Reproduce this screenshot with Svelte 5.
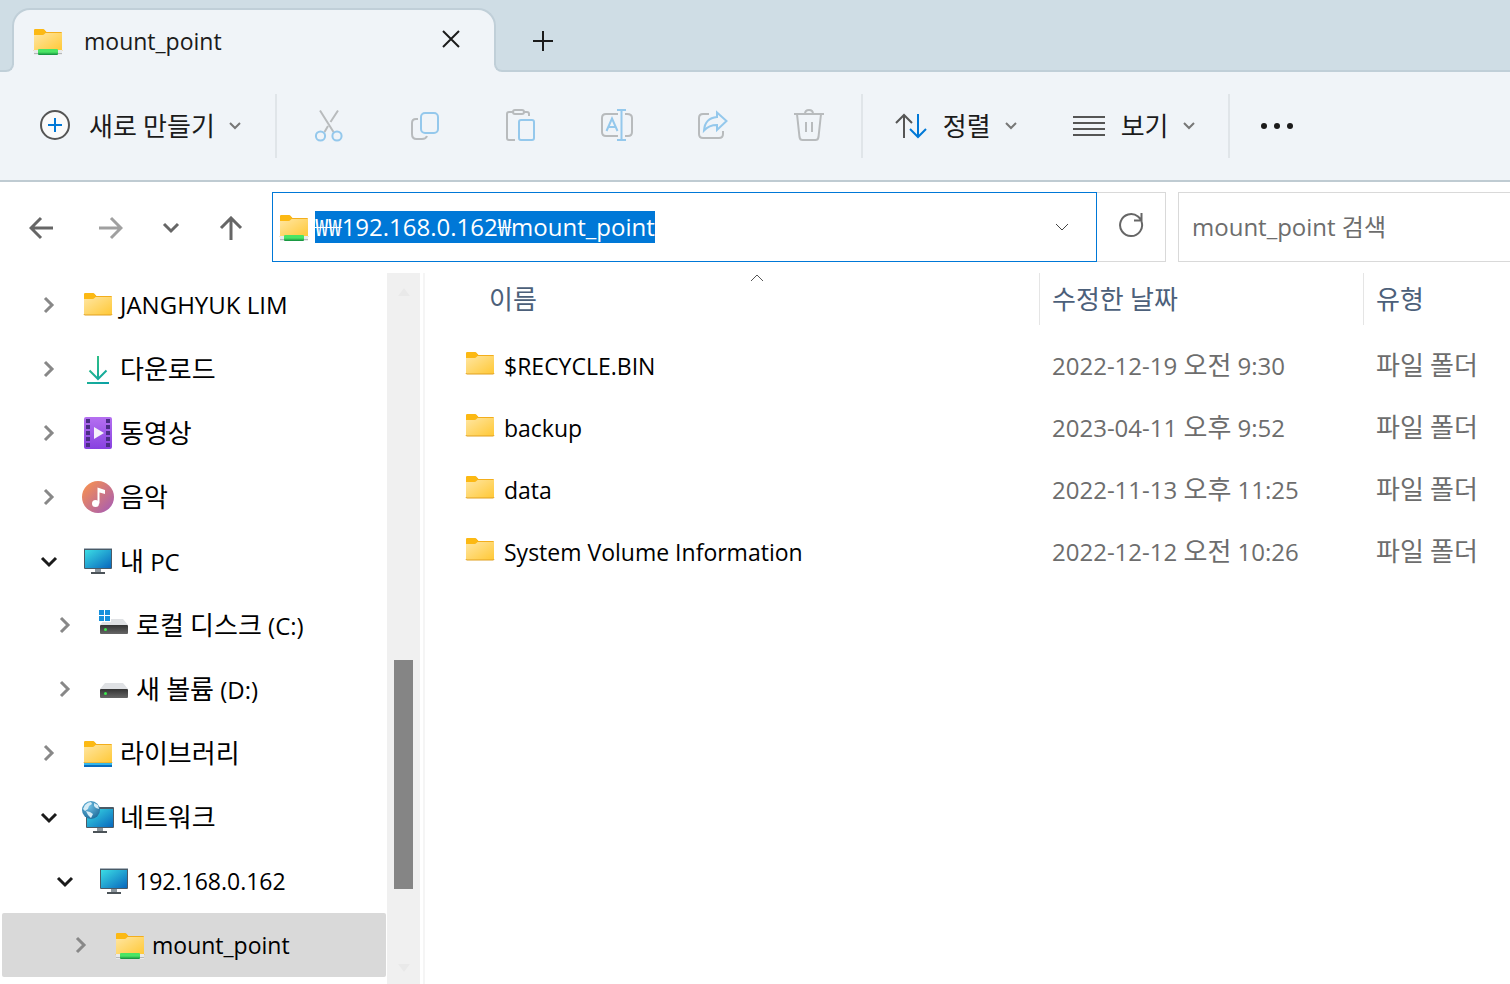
<script>
  import { onMount } from 'svelte';

  let address = $state('₩₩192.168.0.162₩mount_point');
  let query = $state('');
  let selected = $state('mount_point');
  let addressBox;

  const tree = [
    { name: 'JANGHYUK LIM', icon: 'folder', level: 0 },
    { name: '다운로드', icon: 'download', level: 0 },
    { name: '동영상', icon: 'video', level: 0 },
    { name: '음악', icon: 'music', level: 0 },
    { name: '내 PC', icon: 'pc', level: 0, open: true },
    { name: '로컬 디스크 (C:)', icon: 'sysdrive', level: 1 },
    { name: '새 볼륨 (D:)', icon: 'drive', level: 1 },
    { name: '라이브러리', icon: 'library', level: 0 },
    { name: '네트워크', icon: 'network', level: 0, open: true },
    { name: '192.168.0.162', icon: 'pc', level: 1, open: true, remote: true },
    { name: 'mount_point', icon: 'netfolder', level: 2, remote: true },
  ];

  const files = [
    { name: '$RECYCLE.BIN', date: '2022-12-19 오전 9:30', type: '파일 폴더' },
    { name: 'backup', date: '2023-04-11 오후 9:52', type: '파일 폴더' },
    { name: 'data', date: '2022-11-13 오후 11:25', type: '파일 폴더' },
    { name: 'System Volume Information', date: '2022-12-12 오전 10:26', type: '파일 폴더' },
  ];

  const actions = [
    { id: 'cut', label: '잘라내기' },
    { id: 'copy', label: '복사' },
    { id: 'paste', label: '붙여넣기' },
    { id: 'rename', label: '이름 바꾸기' },
    { id: 'share', label: '공유' },
    { id: 'delete', label: '삭제' },
  ];

  // Hangul runs are set a little larger than the Latin around them.
  const runs = (s) => s.split(/([\uac00-\ud7a3]+)/).filter(Boolean);
  const isHangul = (s) => /[\uac00-\ud7a3]/.test(s);

  onMount(() => {
    addressBox.focus();
    addressBox.select();
  });
</script>

{#snippet text(s)}{#each runs(s) as r}<span class:ko={isHangul(r)}>{r}</span>{/each}{/snippet}

{#snippet chevron()}
  <svg class="chev" width="12" height="8" viewBox="0 0 12 8"><path d="M1 1l5 5 5-5" /></svg>
{/snippet}

{#snippet folder()}
  <path d="M2 5.500Q2 4 3.500 4H10.500Q11.500 4 12.300 4.800L14.500 7H29Q30 7 30 8V14H2z" fill="#f3ae1c" />
  <path d="M2 5.500Q2 4 3.500 4H10.500Q11.500 4 12.300 4.800L14 7Q12.500 10 10.500 10H2z" fill="#fcb913" />
  <path d="M2 10H10.500Q11.500 10 12.500 9L13.500 8H30V25Q30 26 29 26H3Q2 26 2 25z" fill="url(#folder-fill)" />
  <path d="M2 25Q2 26 3 26H29Q30 26 30 25" fill="none" stroke="#e0a021" />
{/snippet}

{#snippet monitor()}
  <rect x="13" y="24" width="6" height="4" fill="#8c959c" />
  <rect x="9" y="27" width="14" height="2" fill="#4c5358" />
  <rect x="2" y="3" width="28" height="21" rx="1" fill="#4b5a66" />
  <rect x="2" y="3" width="28" height="1" fill="#a9b4bd" />
  <rect x="3" y="5" width="26" height="18" fill="url(#screen-fill)" />
{/snippet}

{#snippet drive()}
  <path d="M7 10H25L30 16H2z" fill="#dfe1e4" />
  <rect x="2" y="16" width="28" height="9" rx="1" fill="url(#drive-fill)" />
  <circle cx="7.500" cy="20.500" r="1.500" fill="#3bea4d" />
{/snippet}

{#snippet icon(name)}
  <svg class="icon" width="32" height="32" viewBox="0 0 32 32" aria-hidden="true">
    {#if name === 'folder'}
      {@render folder()}
    {:else if name === 'netfolder'}
      {@render folder()}
      <rect x="2" y="25" width="28" height="5" fill="#e9eaeb" />
      <rect x="2" y="28" width="28" height="1" fill="#b5b8bb" />
      <rect x="6" y="24" width="20" height="6" rx="1" fill="url(#pipe-fill)" />
    {:else if name === 'library'}
      {@render folder()}
      <rect x="2" y="26" width="28" height="2" fill="#33b6ea" />
      <rect x="2" y="28" width="28" height="2" fill="#0b6cbd" />
    {:else if name === 'download'}
      <path d="M16 3V26M7.500 17.500L16 26L24.500 17.500M5 30H27" fill="none" stroke="url(#down-fill)" stroke-width="2" />
    {:else if name === 'video'}
      <rect x="2" y="0" width="28" height="32" rx="2" fill="url(#video-fill)" />
      {#each [2, 8, 14, 20, 26] as y}
        <rect x="4" {y} width="4" height="4" fill="#4b2d86" />
        <rect x="24" {y} width="4" height="4" fill="#4b2d86" />
      {/each}
      <path d="M12 10L22 16L12 22z" fill="#f5f2fa" />
    {:else if name === 'music'}
      <circle cx="16" cy="16" r="16" fill="url(#music-fill)" />
      <circle cx="13.500" cy="22.500" r="3.500" fill="#fff" />
      <path d="M15.500 22.500V6.500L23 9V13L17.500 11.500V22.500z" fill="#fff" />
    {:else if name === 'pc'}
      {@render monitor()}
    {:else if name === 'drive'}
      {@render drive()}
    {:else if name === 'sysdrive'}
      {@render drive()}
      <rect x="0" y="0" width="13" height="13" fill="#fff" />
      <path d="M1 1H6V6H1zM7 1H12V6H7zM1 7H6V12H1zM7 7H12V12H7z" fill="#1590dc" />
    {:else if name === 'network'}
      <rect x="15" y="27" width="6" height="3" fill="#8c959c" />
      <rect x="11" y="30" width="14" height="2" fill="#4c5358" />
      <rect x="4" y="6" width="28" height="21" rx="1" fill="#4b5a66" />
      <rect x="5" y="8" width="26" height="18" fill="url(#screen-fill)" />
      <circle cx="9" cy="9" r="9" fill="url(#globe-fill)" />
      <path d="M3 4Q6 1 9 1L10 3L7 5L6 8L3 10L1 8zM12 2L16 4L17 8L14 7L12 5zM4 10L8 11L11 13L9 17L6 14z" fill="#d5ecf6" />
    {/if}
  </svg>
{/snippet}

{#snippet actionIcon(id)}
  <svg class="action" width="36" height="36" viewBox="0 0 36 36" aria-hidden="true">
    {#if id === 'cut'}
      <path class="g" d="M9 2.500L22.500 24M27 2.500L19.500 14M17 18L13.500 24" />
      <circle class="b" cx="9.500" cy="28" r="4.600" />
      <circle class="b" cx="26" cy="28" r="4.600" />
    {:else if id === 'copy'}
      <path class="g" d="M11 11H9Q5 11 5 15V26Q5 31 9.500 31H15Q19 31 20 28" />
      <rect class="b" x="14" y="5" width="17" height="20" rx="4" />
    {:else if id === 'paste'}
      <path class="g" d="M10 4H6Q4 4 4 6V30Q4 32 6 32H12M21 4H24Q26 4 26 6V8" />
      <rect class="g" x="10" y="2" width="11" height="4" rx="2" />
      <rect class="b" x="16" y="12" width="15" height="20" rx="2" />
    {:else if id === 'rename'}
      <path class="g" d="M19 6H7Q3 6 3 10V24Q3 28 7 28H19M26 6H28Q33 6 33 10V24Q33 28 29 28H26" />
      <path class="b" d="M18 2H27M22.500 2V32M18 32H27" />
      <path class="b" d="M7.500 23L13 10.500L18.500 23M9.500 19H16.500" />
    {:else if id === 'share'}
      <path class="g" d="M14 6H8Q4 6 4 10V26Q4 30 8 30H24Q28 30 28 26V23" />
      <path class="b" d="M22 4.500L31.500 13L22 22V17Q14 17 9 22.500Q10 10 22 9z" />
    {:else}
      <path class="g" d="M3 6H33M6 6L8.500 29Q9 32 11.500 32H24.500Q27 32 27.500 29L30 6M14 6Q14 2 18 2Q22 2 22 6M15 14V24M21 14V24" />
    {/if}
  </svg>
{/snippet}

<svg class="defs" width="0" height="0" aria-hidden="true">
  <defs>
    <linearGradient id="folder-fill" x1="0" y1="0" x2="1" y2="1"><stop offset="0" stop-color="#ffe6a2" /><stop offset="1" stop-color="#ffc835" /></linearGradient>
    <linearGradient id="screen-fill" x1="0" y1="0" x2="1" y2="1"><stop offset="0" stop-color="#3bdde5" /><stop offset="1" stop-color="#0867bd" /></linearGradient>
    <linearGradient id="drive-fill" x1="0" y1="0" x2="0" y2="1"><stop offset="0" stop-color="#333" /><stop offset="1" stop-color="#666" /></linearGradient>
    <linearGradient id="pipe-fill" x1="0" y1="0" x2="0" y2="1"><stop offset="0" stop-color="#4ae565" /><stop offset="0.5" stop-color="#4ae565" /><stop offset="1" stop-color="#10893c" /></linearGradient>
    <linearGradient id="down-fill" gradientUnits="userSpaceOnUse" x1="6" y1="4" x2="26" y2="30"><stop offset="0" stop-color="#35c481" /><stop offset="1" stop-color="#0aa1a5" /></linearGradient>
    <linearGradient id="video-fill" x1="0" y1="0" x2="0" y2="1"><stop offset="0" stop-color="#b570f0" /><stop offset="1" stop-color="#8741e0" /></linearGradient>
    <linearGradient id="music-fill" x1="0" y1="0" x2="1" y2="1"><stop offset="0.1" stop-color="#f48f54" /><stop offset="0.9" stop-color="#ab5fae" /></linearGradient>
    <radialGradient id="globe-fill" cx="0.4" cy="0.3" r="0.7"><stop offset="0" stop-color="#6cbde2" /><stop offset="1" stop-color="#23719f" /></radialGradient>
  </defs>
</svg>

<div class="window">
  <header class="titlebar">
    <div class="tab">
      {@render icon('netfolder')}
      <span class="tab-title">mount_point</span>
      <button class="close" aria-label="탭 닫기">
        <svg width="18" height="18" viewBox="0 0 18 18"><path d="M1 1L17 17M17 1L1 17" /></svg>
      </button>
    </div>
    <button class="new-tab" aria-label="새 탭">
      <svg width="20" height="20" viewBox="0 0 20 20"><path d="M10 0V20M0 10H20" /></svg>
    </button>
  </header>

  <div class="toolbar">
    <button class="new">
      <svg width="32" height="32" viewBox="0 0 32 32">
        <circle cx="16" cy="15" r="14" fill="#fafafa" stroke="#555" stroke-width="2" />
        <path d="M16 8V22M9 15H23" stroke="#0078d7" stroke-width="2" />
      </svg>
      {@render text('새로 만들기')}
      {@render chevron()}
    </button>
    <div class="actions">
      {#each actions as a}
        <button aria-label={a.label} disabled>{@render actionIcon(a.id)}</button>
      {/each}
    </div>
    <div class="menus">
      <button>
        <svg width="32" height="26" viewBox="0 0 32 26" fill="none" stroke-width="2">
          <path d="M9 25V2M1 10L9 2L17 10" stroke="#555" />
          <path d="M23 1V24M15 16L23 24L31 16" stroke="#0078d7" />
        </svg>
        {@render text('정렬')}
        {@render chevron()}
      </button>
      <button>
        <svg width="32" height="20" viewBox="0 0 32 20"><path d="M0 1H32M0 7H32M0 13H32M0 19H32" stroke="#555" stroke-width="2" /></svg>
        {@render text('보기')}
        {@render chevron()}
      </button>
    </div>
    <button class="more" aria-label="자세히 보기">
      <svg width="32" height="8" viewBox="0 0 32 8"><circle cx="3" cy="4" r="3" /><circle cx="16" cy="4" r="3" /><circle cx="29" cy="4" r="3" /></svg>
    </button>
  </div>

  <div class="navbar">
    <div class="nav-buttons">
      <button aria-label="뒤로"><svg width="24" height="24" viewBox="0 0 24 24"><path d="M24 12H2M12 2L2 12L12 22" /></svg></button>
      <button aria-label="앞으로" disabled><svg width="24" height="24" viewBox="0 0 24 24"><path d="M0 12H22M12 2L22 12L12 22" /></svg></button>
      <button class="recent" aria-label="최근 위치"><svg width="18" height="12" viewBox="0 0 18 12"><path d="M2 2L9 9L16 2" /></svg></button>
      <button aria-label="위로"><svg width="24" height="24" viewBox="0 0 24 24"><path d="M12 24V2M2 12L12 2L22 12" /></svg></button>
    </div>
    <div class="address">
      {@render icon('netfolder')}
      <input bind:this={addressBox} bind:value={address} aria-label="주소" spellcheck="false" />
      <button aria-label="이전 위치"><svg width="14" height="8" viewBox="0 0 14 8"><path d="M1 1L7 7L13 1" /></svg></button>
    </div>
    <button class="refresh" aria-label="새로 고침">
      <svg width="26" height="26" viewBox="0 0 26 26"><path d="M23.500 9.500A11 11 0 1 1 20 4.500L23 7.500M23.500 1V8.500H16" /></svg>
    </button>
    <input class="search" bind:value={query} placeholder="mount_point 검색" aria-label="검색" />
  </div>

  <div class="body">
    <nav class="tree">
      {#each tree as n}
        <button class="node" class:selected={n.name === selected} style="padding-left: {37 + n.level * 16}px" onclick={() => (selected = n.name)}>
          <svg class="twist" class:open={n.open} width="20" height="20" viewBox="0 0 20 20">
            <path d={n.open ? 'M3 7L10 14L17 7' : 'M6 3L13 10L6 17'} />
          </svg>
          {@render icon(n.icon)}
          <span class="label" class:remote={n.remote}>{@render text(n.name)}</span>
        </button>
      {/each}
    </nav>
    <div class="scrollbar">
      <svg width="12" height="8" viewBox="0 0 12 8"><path d="M6 0L12 8H0z" /></svg>
      <div class="before"></div>
      <div class="thumb"></div>
      <div class="after"></div>
      <svg width="12" height="8" viewBox="0 0 12 8"><path d="M0 0H12L6 8z" /></svg>
    </div>
    <main>
      <table>
        <thead>
          <tr>
            <th class="name" aria-sort="ascending">
              {@render text('이름')}
              <svg class="sort" width="14" height="8" viewBox="0 0 14 8"><path d="M1 7L7 1L13 7" /></svg>
            </th>
            <th class="date">{@render text('수정한 날짜')}</th>
            <th class="type">{@render text('유형')}</th>
          </tr>
        </thead>
        <tbody>
          {#each files as f}
            <tr>
              <td class="name"><div class="file">{@render icon('folder')}<span>{f.name}</span></div></td>
              <td>{@render text(f.date)}</td>
              <td>{@render text(f.type)}</td>
            </tr>
          {/each}
        </tbody>
      </table>
    </main>
  </div>
</div>

<style>
  :global(body) { margin: 0; background: #fff; }
  .defs { position: absolute; }
  .window {
    display: flex; flex-direction: column; min-height: 100vh; overflow: hidden;
    font: 24px/32px "Open Sans", "Noto Sans CJK KR", sans-serif; color: #000;
  }
  button { font: inherit; color: inherit; background: none; border: 0; padding: 0; display: flex; align-items: center; }
  input { font: inherit; color: inherit; border: 0; padding: 0; outline: 0; background: none; min-width: 0; }
  svg { flex: none; display: block; }
  .ko { font-size: 26px; }

  .titlebar { display: flex; height: 72px; box-sizing: border-box; padding: 8px 0 0 12px; background: #cfdde5; box-shadow: inset 0 -2px #c0cfd8; }
  .tab {
    position: relative; display: flex; align-items: center; width: 484px; box-sizing: border-box; padding: 0 34px 0 18px;
    background: #f0f4f8; border: 2px solid #c0cfd8; border-bottom: 0; border-radius: 18px 18px 0 0;
  }
  /* flared feet of the tab */
  .tab::before, .tab::after {
    content: ''; position: absolute; bottom: 0; width: 8px; height: 8px; box-sizing: border-box;
    border: 2px solid #c0cfd8; border-top: 0; background: #cfdde5; box-shadow: 0 3px 0 2px #f0f4f8; clip-path: inset(0);
  }
  .tab::before { right: 100%; border-left: 0; border-bottom-right-radius: 8px; }
  .tab::after { left: 100%; border-right: 0; border-bottom-left-radius: 8px; }
  .tab-title { margin-left: 20px; flex: 1; font-size: 23px; color: #1b1b1b; }
  .close { padding-bottom: 4px; }
  .close svg { stroke: #1b1b1b; stroke-width: 2; }
  .new-tab { padding: 2px 20px 0 37px; }
  .new-tab svg { stroke: #1b1b1b; stroke-width: 2; }

  .toolbar { display: flex; align-items: center; height: 108px; padding-left: 39px; background: #f0f4f8; border-bottom: 2px solid #bfcbd2; color: #1b1b1b; }
  .new { padding-right: 34px; height: 64px; border-right: 2px solid #e0e5e9; white-space: pre; }
  .new svg:first-child { margin-right: 18px; }
  .chev { margin-left: 14px; fill: none; stroke: #777; stroke-width: 2; }
  .actions { display: flex; padding: 0 4px; height: 64px; border-right: 2px solid #e0e5e9; }
  .actions button { width: 96px; justify-content: center; }
  .action { fill: none; stroke-width: 2; }
  .g { stroke: #b8bbbd; }
  .b { stroke: #94c8ec; }
  .menus { display: flex; gap: 56px; height: 64px; padding: 0 33px 0 32px; border-right: 2px solid #e0e5e9; }
  .menus button svg:first-child { margin-right: 16px; }
  .more { padding: 20px 31px; fill: #1b1b1b; }

  .navbar { display: flex; height: 70px; padding: 10px 0 11px 6px; }
  .nav-buttons { display: flex; margin-right: 6px; padding-top: 2px; fill: none; stroke: #666; stroke-width: 3; }
  .nav-buttons button { width: 70px; justify-content: center; }
  .nav-buttons button:disabled { stroke: #a0a0a0; }
  .nav-buttons .recent { width: 50px; }
  .address { flex: 1; display: flex; align-items: center; border: 1px solid #0078d7; padding-left: 5px; }
  .address input { flex: 1; margin-left: 5px; height: 32px; }
  .address input::selection { background: #0078d7; color: #fff; }
  .address button { align-self: stretch; padding: 0 27px; }
  .address button svg { fill: none; stroke: #444; stroke-width: 1; }
  .refresh { width: 69px; justify-content: center; padding-bottom: 4px; border: 1px solid #d9d9d9; border-left: 0; fill: none; stroke: #666; stroke-width: 2; }
  .search { width: 332px; box-sizing: border-box; margin-left: 12px; padding-left: 13px; border: 1px solid #d9d9d9; border-right: 0; }
  .search::placeholder { color: #6d6d6d; opacity: 1; }

  .body { flex: 1; display: flex; }
  .tree { width: 384px; padding: 0 1px 0 2px; }
  .node { width: 100%; height: 64px; border-radius: 2px; white-space: pre; }
  .node.selected { background: #d9d9d9; }
  .twist { fill: none; stroke: #888; stroke-width: 3; margin-right: 23px; }
  .twist.open { stroke: #1b1b1b; }
  .label { margin-left: 6px; }
  .remote { font-size: 23px; }
  .scrollbar { width: 33px; box-sizing: border-box; padding: 15px 0 12px; background: #f0f0f0; display: flex; flex-direction: column; align-items: center; fill: #e9e9e9; }
  .before { flex: 364; }
  .thumb { flex: 229; width: 19px; background: #858585; }
  .after { flex: 75; }

  main { flex: 1; margin-left: 3px; border-left: 2px solid #f5f5f5; }
  table { width: 100%; table-layout: fixed; border-collapse: separate; border-spacing: 0; }
  th { position: relative; height: 52px; padding: 0 0 0 12px; font-weight: normal; text-align: left; color: #4c607a; border-right: 1px solid #e5e5e5; box-sizing: border-box; white-space: pre; }
  th.name { padding-left: 64px; }
  th.date { width: 324px; }
  th.type { width: 146px; border-right: 0; }
  .sort { position: absolute; top: 1px; left: calc(50% + 18px); fill: none; stroke: #555; stroke-width: 1; }
  tbody::before { content: ''; display: block; height: 10px; }
  td { height: 62px; padding: 0 0 2px 12px; box-sizing: border-box; color: #6d6d6d; white-space: pre; }
  td.name { padding: 0 0 0 39px; font-size: 23px; color: #000; }
  .file { display: flex; align-items: center; gap: 8px; }
  .file .icon { margin-bottom: 4px; }
</style>
